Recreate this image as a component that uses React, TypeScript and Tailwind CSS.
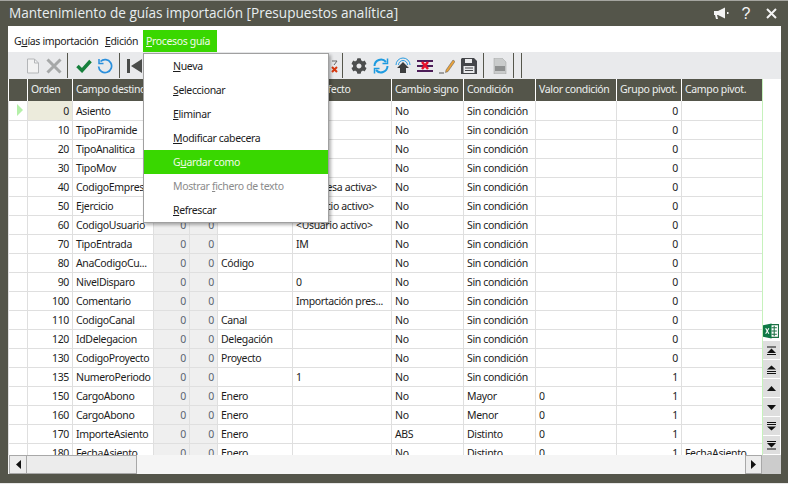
import React from "react";
import { FaCog } from "react-icons/fa";

const rows: string[][] = [
  ["0", "Asiento", "0", "0", "", "", "No", "Sin condición", "", "0", ""],
  ["10", "TipoPiramide", "0", "0", "", "", "No", "Sin condición", "", "0", ""],
  ["20", "TipoAnalitica", "0", "0", "", "", "No", "Sin condición", "", "0", ""],
  ["30", "TipoMov", "0", "0", "", "", "No", "Sin condición", "", "0", ""],
  ["40", "CodigoEmpresa", "0", "0", "", "<Empresa activa>", "No", "Sin condición", "", "0", ""],
  ["50", "Ejercicio", "0", "0", "", "<Ejercicio activo>", "No", "Sin condición", "", "0", ""],
  ["60", "CodigoUsuario", "0", "0", "", "<Usuario activo>", "No", "Sin condición", "", "0", ""],
  ["70", "TipoEntrada", "0", "0", "", "IM", "No", "Sin condición", "", "0", ""],
  ["80", "AnaCodigoCu...", "0", "0", "Código", "", "No", "Sin condición", "", "0", ""],
  ["90", "NivelDisparo", "0", "0", "", "0", "No", "Sin condición", "", "0", ""],
  ["100", "Comentario", "0", "0", "", "Importación pres...", "No", "Sin condición", "", "0", ""],
  ["110", "CodigoCanal", "0", "0", "Canal", "", "No", "Sin condición", "", "0", ""],
  ["120", "IdDelegacion", "0", "0", "Delegación", "", "No", "Sin condición", "", "0", ""],
  ["130", "CodigoProyecto", "0", "0", "Proyecto", "", "No", "Sin condición", "", "0", ""],
  ["135", "NumeroPeriodo", "0", "0", "", "1", "No", "Sin condición", "", "1", ""],
  ["150", "CargoAbono", "0", "0", "Enero", "", "No", "Mayor", "0", "1", ""],
  ["160", "CargoAbono", "0", "0", "Enero", "", "No", "Menor", "0", "1", ""],
  ["170", "ImporteAsiento", "0", "0", "Enero", "", "ABS", "Distinto", "0", "1", ""],
  ["180", "FechaAsiento", "0", "0", "Enero", "", "No", "Distinto", "0", "1", "FechaAsiento"],
];

const headers = ["Orden", "Campo destino", "", "", "", "Valor efecto", "Cambio signo", "Condición", "Valor condición", "Grupo pivot.", "Campo pivot."];
const numeric = [0, 2, 3, 9];

const MenuItem = ({ pre, u, post, active, disabled }: { pre?: string; u: string; post: string; active?: boolean; disabled?: boolean }) => (
  <div className={`h-6 pl-[29px] pt-[2px] flex items-center ${active ? "bg-[#39d700] text-[#f2fbe8]" : disabled ? "text-[#8b8b8b]" : "text-[#1c1c1c]"}`}>
    <span>{pre}<u>{u}</u>{post}</span>
  </div>
);

const Sep = ({ className = "" }: { className?: string }) => <div className={`w-px h-[25px] bg-[#55564c] shrink-0 ${className}`} />;

const ScrollBtn = ({ children }: { children: React.ReactNode }) => (
  <div className="h-[18px] w-[17px] mx-auto bg-[#dedede] flex items-center justify-center">
    <svg width="11" height="11" viewBox="0 0 11 11" fill="#111">{children}</svg>
  </div>
);

export default function App() {
  return (
    <div className="w-[788px] h-[484px] bg-[#54554a] flex flex-col border-t border-[#a5a5a0] overflow-hidden relative text-[10.5px] tracking-[-0.35px] text-[#1c1c1c] font-['Noto_Sans','Open_Sans',sans-serif]">
      {/* title bar */}
      <div className="h-[25px] shrink-0 flex items-center pl-[9px] pr-[11px] text-[#e8eef0]">
        <span className="text-[13.6px] tracking-normal font-['Open_Sans',sans-serif] grow whitespace-nowrap">Mantenimiento de guías importación [Presupuestos analítica]</span>
        <svg width="17" height="14" viewBox="0 0 17 14" fill="#f4f4f4" className="mr-[11px]">
          <path d="M1 4h4l7-3.500v11L5 8H4l1 4H3L2 8H1z" />
          <path d="M14 5h1.500v2H14z" />
        </svg>
        <span className="text-[16px] leading-none text-[#f4f4f4] font-['Liberation_Sans',sans-serif] mr-[16px]">?</span>
        <svg width="11" height="11" viewBox="0 0 11 11" stroke="#f4f4f4" strokeWidth="2"><path d="M1 1l9 9M10 1l-9 9" /></svg>
      </div>

      <div className="mx-[8px] w-[773px] h-[448px] shrink-0 flex flex-col bg-white">
        {/* menu bar */}
        <div className="h-[26px] shrink-0 flex items-end pl-[5px] whitespace-nowrap">
          <span className="h-[22px] w-[91px] pl-px flex items-center pt-[2px]">G<u>u</u>ías importación</span>
          <span className="h-[22px] w-[39px] pl-px flex items-center pt-[2px]"><u>E</u>dición</span>
          <span className="h-[22px] w-[74px] bg-[#39d700] text-[#f2fbe8] flex items-center pl-[3px] pt-[2px]"><u>P</u>rocesos guía</span>
        </div>

        {/* toolbar */}
        <div className="h-[27px] shrink-0 bg-[#e9eaec] flex items-center">
          <svg width="14" height="16" viewBox="0 0 14 16" fill="none" stroke="#b4b6b8" className="ml-[18px]"><path d="M1.500 1h7l4 4v10h-11z" fill="#f2f2f2" /><path d="M8.500 1v4h4" /></svg>
          <svg width="16" height="16" viewBox="0 0 16 16" stroke="#a6a8a8" strokeWidth="3" className="ml-[6px]"><path d="M1.500 1.500l13 13M14.500 1.500l-13 13" /></svg>
          <Sep className="ml-[5px]" />
          <svg width="16" height="14" viewBox="0 0 16 14" fill="none" stroke="#16803c" strokeWidth="3.500" className="ml-[8px]"><path d="M1.500 7l4.500 4.500L14.500 2" /></svg>
          <svg width="16" height="16" viewBox="0 0 16 16" fill="none" stroke="#2a8fdc" strokeWidth="1.700" className="ml-[5px]"><path d="M3.500 3.500A6.500 6.500 0 1 1 1.600 8.500" /><path d="M2 1v4.500h4.500" strokeWidth="1.500" /></svg>
          <Sep className="ml-[6px]" />
          <svg width="16" height="16" viewBox="0 0 16 16" fill="#4a4c4a" className="ml-[7px]"><path d="M0 1h3v14H0zM15 1v14L4 8z" /></svg>
          <svg width="8" height="16" viewBox="0 0 8 16" className="ml-[188px]"><path d="M1 3h5L3 7" stroke="#666" fill="none" /><path d="M1 9l5 5M6 9l-5 5" stroke="#d8380e" strokeWidth="2" /></svg>
          <Sep className="ml-[3px]" />
          <FaCog className="ml-[8px] w-4 h-4 text-[#4c4e4e]" />
          <svg width="16" height="16" viewBox="0 0 16 16" fill="none" stroke="#1e9be0" strokeWidth="2" className="ml-[6px]"><path d="M1.500 8A6.500 6.500 0 0 1 13 4" /><path d="M14.500 8A6.500 6.500 0 0 1 3 12" /><path d="M14.500 0.500v5h-5" strokeWidth="1.500" /><path d="M1.500 15.500v-5h5" strokeWidth="1.500" /></svg>
          <svg width="16" height="17" viewBox="0 0 16 17" fill="none" className="ml-[6px]"><path d="M1 8a7 7 0 0 1 14 0" stroke="#2a9be0" /><path d="M3.500 8a4.500 4.500 0 0 1 9 0" stroke="#2a9be0" /><path d="M8 5l6 6h-3v5H5v-5H2z" fill="#3c3e3e" /></svg>
          <svg width="16" height="14" viewBox="0 0 16 14" className="ml-[6px]"><path d="M0 1h16v2H0zM0 6h16v2H0zM0 11h16v2H0z" fill="#4c1d58" /><path d="M5 3l6 7M11 3l-6 7" stroke="#e8102c" strokeWidth="2.500" /></svg>
          <svg width="16" height="16" viewBox="0 0 16 16" className="ml-[6px]"><path d="M0 15h5" stroke="#555" /><path d="M7 12l7-10 2 1.500-7 10-2.500 1z" fill="#e8a23c" stroke="#555" strokeWidth="0.500" /></svg>
          <svg width="16" height="16" viewBox="0 0 16 16" className="ml-[6px]"><path d="M1 0h12l3 3v13H0V1z" fill="#44464a" /><path d="M4 1h7v4H4z" fill="#e9eaec" /><path d="M2.500 8h11v7h-11z" fill="#e9eaec" /><path d="M4 10h8M4 12.500h8" stroke="#44464a" /></svg>
          <Sep className="ml-[6px]" />
          <svg width="14" height="16" viewBox="0 0 14 16" className="ml-[9px]"><path d="M1 0h8l4 4v12H1z" fill="#c9cbcb" stroke="#9c9e9e" strokeWidth="0.500" /><path d="M2 8h10v5H2z" fill="#8e9090" /></svg>
          <Sep className="ml-[6px]" />
          <Sep className="ml-[7px]" />
        </div>

        {/* grid */}
        <div className="h-[376px] shrink-0 flex overflow-hidden">
          <div className="w-[754px] shrink-0 overflow-hidden">
            <table className="table-fixed border-collapse w-[754px]">
              <colgroup>
                <col className="w-[19px]" />
                <col className="w-[45px]" />
                <col className="w-[81px]" />
                <col className="w-[36px]" />
                <col className="w-[28px]" />
                <col className="w-[75px]" />
                <col className="w-[99px]" />
                <col className="w-[72px]" />
                <col className="w-[72px]" />
                <col className="w-[81px]" />
                <col className="w-[65px]" />
                <col className="w-[81px]" />
              </colgroup>
              <thead>
                <tr className="h-[22px] bg-[#54554a] text-[#eef1f0]">
                  <th className="p-0" />
                  {headers.map((h, i) => (
                    <th key={i} className="pl-[3px] pr-0 py-0 font-normal text-left whitespace-nowrap overflow-hidden border-l border-white">{h}</th>
                  ))}
                </tr>
              </thead>
              <tbody>
                {rows.map((r, i) => (
                  <tr key={i} className="h-[19px] border-b border-[#dfdfdf]">
                    <td className="p-0 border-l border-[#dfdfdf]">
                      {i === 0 && <div className="ml-[8px] w-0 h-0 border-y-[6px] border-y-transparent border-l-[6px] border-l-[#b4f0a8]" />}
                    </td>
                    {r.map((c, j) => (
                      <td
                        key={j}
                        className={`pl-[3px] pr-[3px] pt-[2px] pb-0 leading-none whitespace-nowrap overflow-hidden border-l border-[#dfdfdf] ${numeric.includes(j) ? "text-right" : ""} ${j === 0 && i === 0 ? "bg-[#ecebdc]" : ""} ${j === 2 || j === 3 ? "bg-[#efefef] text-[#5a6470]" : ""}`}
                      >
                        {c}
                      </td>
                    ))}
                  </tr>
                ))}
              </tbody>
            </table>
          </div>

          {/* right strip */}
          <div className="w-[18px] shrink-0 border-l border-[#c6f2bc] flex flex-col justify-end">
            <div className="h-[19px] flex items-center justify-start pb-[2px]">
              <svg width="16" height="16" viewBox="0 0 15 14">
                <path d="M6 1h8.500v12H6z" fill="#fff" stroke="#1d7044" />
                <path d="M8 4h5M8 7h5M8 10h5M10.500 2v10" stroke="#1d7044" />
                <path d="M0 1.500L8 0v14l-8-1.500z" fill="#0f7a45" />
                <path d="M2.500 4.500l3 5M5.500 4.500l-3 5" stroke="#fff" />
              </svg>
            </div>
            <div className="flex flex-col gap-px pb-px">
              <ScrollBtn><path d="M1 1.500h9v1H1zM5.500 3.500L10 8H1zM1 9h9v1H1z" /></ScrollBtn>
              <ScrollBtn><path d="M5.500 1.500L10 5.500H1zM1 7h9v1H1zM1 9h9v1H1z" /></ScrollBtn>
              <ScrollBtn><path d="M5.500 3L10 8H1z" /></ScrollBtn>
              <ScrollBtn><path d="M5.500 8L10 3H1z" /></ScrollBtn>
              <ScrollBtn><path d="M1 1h9v1H1zM1 3h9v1H1zM5.500 9.500L10 5.500H1z" /></ScrollBtn>
              <ScrollBtn><path d="M1 1h9v1H1zM5.500 7.500L10 3H1zM1 8.500h9v1H1z" /></ScrollBtn>
            </div>
          </div>
        </div>

        {/* horizontal scrollbar */}
        <div className="h-[19px] shrink-0 flex">
          <div className="w-[754px] flex bg-[#f5f5f5]">
            <div className="w-[18px] ml-px bg-[#ececec] border border-[#a8a8a8] flex items-center justify-center">
              <svg width="5" height="9" viewBox="0 0 5 9" fill="#111"><path d="M5 0v9L0 4.500z" /></svg>
            </div>
            <div className="w-[110px] bg-[#ececec] border border-[#a8a8a8] border-l-0" />
            <div className="grow" />
            <div className="w-[17px] bg-[#ececec] border border-[#a8a8a8] flex items-center justify-center">
              <svg width="5" height="9" viewBox="0 0 5 9" fill="#111"><path d="M0 0v9l5-4.500z" /></svg>
            </div>
          </div>
          <div className="w-[19px] bg-[#cccccc]" />
        </div>
      </div>

      <div className="grow" />
      <div className="h-px bg-[#e8e8e8]" />

      {/* dropdown */}
      <div className="absolute left-[143px] top-[52px] w-[186px] h-[170px] bg-white border border-[#a0a0a0] shadow-[2px_2px_3px_rgba(0,0,0,0.3)]">
        <MenuItem u="N" post="ueva" />
        <MenuItem u="S" post="eleccionar" />
        <MenuItem u="E" post="liminar" />
        <MenuItem u="M" post="odificar cabecera" />
        <MenuItem pre="G" u="u" post="ardar como" active />
        <MenuItem pre="Mostrar " u="f" post="ichero de texto" disabled />
        <MenuItem u="R" post="efrescar" />
      </div>
    </div>
  );
}
